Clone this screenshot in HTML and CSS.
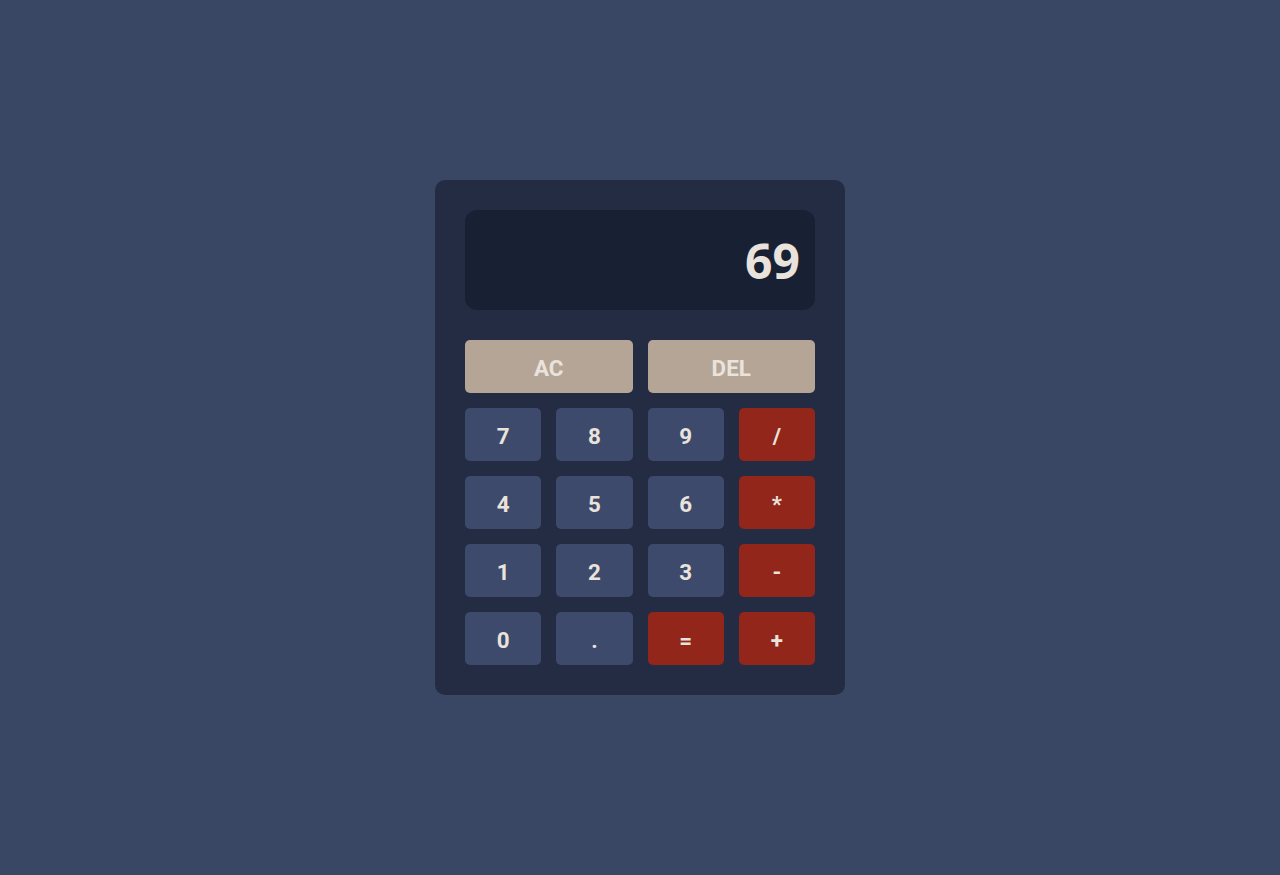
FILE: index.html
```html
<!DOCTYPE html>
<html lang="en">
<head>
<meta charset="utf-8">
<title>Calculator</title>
<link rel="stylesheet" href="styles.css">
</head>
<body>
<main class="page">
  <div class="calc">
    <div class="display">69</div>
    <div class="keys">
      <button class="key key-fn key-wide">AC</button>
      <button class="key key-fn key-wide">DEL</button>
      <button class="key">7</button>
      <button class="key">8</button>
      <button class="key">9</button>
      <button class="key key-op">/</button>
      <button class="key">4</button>
      <button class="key">5</button>
      <button class="key">6</button>
      <button class="key key-op">*</button>
      <button class="key">1</button>
      <button class="key">2</button>
      <button class="key">3</button>
      <button class="key key-op">-</button>
      <button class="key">0</button>
      <button class="key">.</button>
      <button class="key key-op">=</button>
      <button class="key key-op">+</button>
    </div>
  </div>
</main>
</body>
</html>
```
FILE: styles.css
```css
* { box-sizing: border-box; }
html, body { margin: 0; padding: 0; }
body {
  background: #3a4764;
  font-family: Roboto, "Liberation Sans", sans-serif;
}
.page {
  min-height: 875px;
  display: flex;
  align-items: center;
  justify-content: center;
}
.calc {
  width: 410px;
  padding: 30px;
  background: #232c43;
  border-radius: 10px;
}
.display {
  height: 100px;
  background: #182034;
  border-radius: 12px;
  display: flex;
  align-items: center;
  justify-content: flex-end;
  padding: 0 15px;
  color: #eae3dc;
  font-family: "Open Sans", "Noto Sans", sans-serif;
  font-weight: 700;
  font-size: 48px;
  margin-bottom: 30px;
}
.keys {
  display: grid;
  grid-template-columns: repeat(4, 1fr);
  gap: 15px;
}
.key {
  height: 53px;
  border: none;
  border-radius: 5px;
  background: #3d4a6b;
  color: #eae3dc;
  font-family: Roboto, "Liberation Sans", sans-serif;
  font-weight: 700;
  font-size: 22.4px;
  padding: 2px 0 0;
}
.key-wide { grid-column: span 2; }
.key-fn { background: #b5a597; }
.key-op { background: #93261a; }
```
